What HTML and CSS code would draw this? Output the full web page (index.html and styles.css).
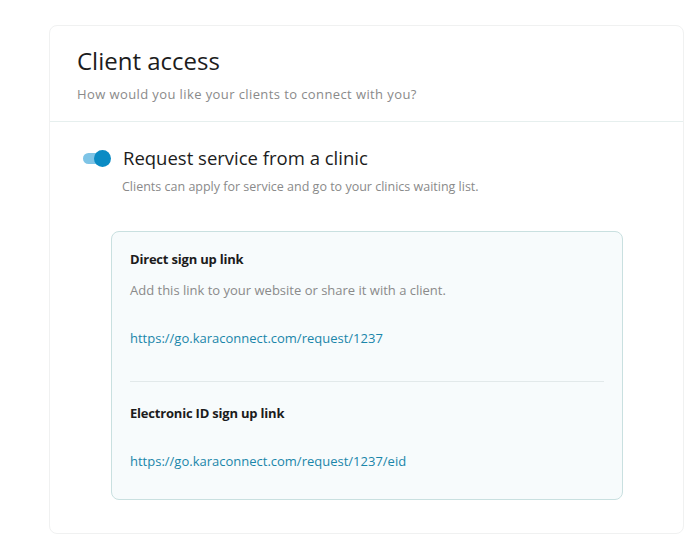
FILE: index.html
```html
<!DOCTYPE html>
<html lang="en">
<head>
    <meta charset="UTF-8">
    <title>Client access</title>
    <link rel="stylesheet" href="styles.css">
</head>
<body>
<div class="card">
    <div class="card-head">
        <h1>Client access</h1>
        <p>How would you like your clients to connect with you?</p>
    </div>
    <div class="card-body">
        <div class="option">
            <span class="toggle"><span class="knob"></span></span>
            <h2>Request service from a clinic</h2>
        </div>
        <p class="option-desc">Clients can apply for service and go to your clinics waiting list.</p>
        <div class="links">
            <div class="link-item">
                <h3>Direct sign up link</h3>
                <p class="hint">Add this link to your website or share it with a client.</p>
                <a href="#">https://go.karaconnect.com/request/1237</a>
            </div>
            <div class="link-item">
                <h3>Electronic ID sign up link</h3>
                <a href="#">https://go.karaconnect.com/request/1237/eid</a>
            </div>
        </div>
    </div>
</div>
</body>
</html>
```

FILE: styles.css
```css
*{ margin:0; padding:0; box-sizing:border-box;}
body{ background:#fff; font-family:"Open Sans", "Liberation Sans", sans-serif; color:#1c1c1c;}
.card{ width:635px; height:509px; margin:25px 0 0 49px; border:1px solid #f0f1f1; border-radius:8px;}
.card-head{ height:96px; padding:20px 27px 0; border-bottom:1px solid #e6efee;}
.card-head h1{ font-size:24px; font-weight:400; line-height:30px; letter-spacing:0;}
.card-head p{ margin-top:9px; font-size:13px; line-height:18px; color:#8a8a8a; letter-spacing:0.4px;}
.card-body{ padding:25px 60px 0 33px;}
.option{ display:flex; align-items:center; height:22px;}
.toggle{ position:relative; width:27px; height:11px; border-radius:6px; background:#7ec4e6; margin-right:13px;}
.knob{ position:absolute; right:-1px; top:-3px; width:17px; height:17px; border-radius:50%; background:#0a8bc4;}
.option h2{ font-size:18.5px; font-weight:400; line-height:22px;}
.option-desc{ margin:9px 0 0 39px; font-size:12.5px; line-height:18px; color:#8a8a8a;}
.links{ margin:35px 0 0 28px; border:1px solid #c9e0e0; border-radius:8px; background:#f7fbfc; padding:0 18px;}
.link-item{ padding:18px 0 34px;}
.link-item + .link-item{ border-top:1px solid #e2e9ea; padding-top:22px; padding-bottom:29px;}
.link-item h3{ font-size:13px; font-weight:700; line-height:18px; letter-spacing:-0.2px;}
.hint{ margin-top:13px; font-size:13px; line-height:18px; color:#8a8a8a;}
.link-item a{ display:block; margin-top:30px; font-size:13px; line-height:18px; color:#1a86aa; text-decoration:none;}
```
